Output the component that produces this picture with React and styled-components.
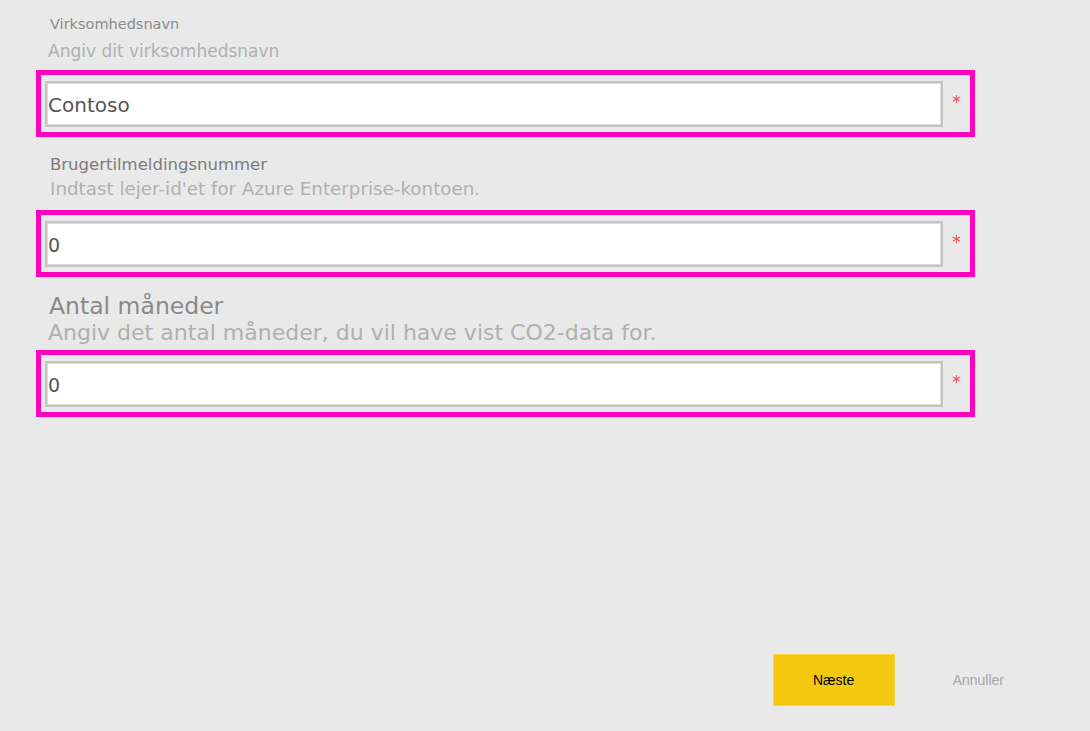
import React from 'react'
import styled, { createGlobalStyle } from 'styled-components';

const GlobalStyle = createGlobalStyle`
    html, body {
        margin: 0;
        padding: 0;
        background-color: #e9e9e9;
    }
    * {
        box-sizing: border-box;
    }
`;

const Page = styled.div`
    width: 1090px;
    height: 731px;
    display: flex;
    flex-direction: column;
    background-color: #e9e9e9;
    font-family: "DejaVu Sans", "Liberation Sans", sans-serif;
    overflow: hidden;
`;

const Form = styled.div`
    display: flex;
    flex-direction: column;
    padding: 15px 0 0 36px;
    width: 975px;
`;

const Field = styled.div`
    display: flex;
    flex-direction: column;
    margin-top: ${({ top }) => top}px;
`;

const Title = styled.div`
    font-size: ${({ size }) => size}px;
    line-height: ${({ lh }) => lh}px;
    color: ${({ color }) => color};
    padding-left: ${({ indent }) => indent}px;
    white-space: nowrap;
`;

const Hint = styled.div`
    font-size: ${({ size }) => size}px;
    line-height: ${({ lh }) => lh}px;
    color: #b0b0b0;
    padding-left: ${({ indent }) => indent}px;
    margin-top: ${({ gap }) => gap}px;
    margin-bottom: ${({ below }) => below}px;
    white-space: nowrap;
`;

const Highlight = styled.div`
    display: flex;
    align-items: center;
    border: 5px solid #ff00bf;
    padding: 5px 0 5px 4px;
    height: 67px;
`;

const Input = styled.input`
    flex: 1;
    height: 46px;
    margin: 0;
    padding: 2px 0 0 1px;
    border: 2px solid #c4c4c4;
    box-shadow: inset 0 0 0 1px #dcdcdc;
    background-color: #ffffff;
    font-family: "DejaVu Sans", "Liberation Sans", sans-serif;
    font-size: ${({ size }) => size}px;
    color: #555555;
    outline: none;
`;

const Required = styled.span`
    width: 27px;
    text-align: center;
    font-size: 17px;
    line-height: 17px;
    color: #f04848;
    margin-top: -3px;
    font-family: "DejaVu Sans", sans-serif;
`;

const Footer = styled.div`
    margin-top: auto;
    display: flex;
    align-items: center;
    justify-content: flex-end;
    gap: 58px;
    padding: 0 86px 25px 0;
`;

const PrimaryButton = styled.button`
    width: 122px;
    height: 52px;
    background-color: #f2c811;
    border: 1px solid #f4d43e;
    font-family: "Liberation Sans", Arial, sans-serif;
    font-size: 14px;
    color: #000000;
    cursor: pointer;
`;

const TextButton = styled.button`
    background: none;
    border: none;
    padding: 0;
    font-family: "Liberation Sans", Arial, sans-serif;
    font-size: 14px;
    color: #a6a6a6;
    cursor: pointer;
`;

const fields = [
    {
        top: 0,
        title: 'Virksomhedsnavn', titleSize: 14.5, titleLh: 18, titleColor: '#8c8c8c', titleIndent: 14,
        hint: 'Angiv dit virksomhedsnavn', hintSize: 17, hintLh: 20, hintIndent: 12, gap: 8, below: 9,
        value: 'Contoso', valueSize: 20,
    },
    {
        top: 18,
        title: 'Brugertilmeldingsnummer', titleSize: 16.5, titleLh: 20, titleColor: '#7c7c7c', titleIndent: 14,
        hint: "Indtast lejer-id'et for Azure Enterprise-kontoen.", hintSize: 18.3, hintLh: 22, hintIndent: 14, gap: 3, below: 10,
        value: '0', valueSize: 19,
    },
    {
        top: 18,
        title: 'Antal måneder', titleSize: 23.5, titleLh: 22, titleColor: '#8a8a8a', titleIndent: 13,
        hint: 'Angiv det antal måneder, du vil have vist CO2-data for.', hintSize: 22, hintLh: 22, hintIndent: 12, gap: 5, below: 6,
        value: '0', valueSize: 19,
    },
];

const App = () => {
    return (
        <Page>
            <GlobalStyle />
            <Form>
                {fields.map((f) => (
                    <Field key={f.title} top={f.top}>
                        <Title size={f.titleSize} lh={f.titleLh} color={f.titleColor} indent={f.titleIndent}>
                            {f.title}
                        </Title>
                        <Hint size={f.hintSize} lh={f.hintLh} indent={f.hintIndent} gap={f.gap} below={f.below}>
                            {f.hint}
                        </Hint>
                        <Highlight>
                            <Input size={f.valueSize} defaultValue={f.value} readOnly />
                            <Required>*</Required>
                        </Highlight>
                    </Field>
                ))}
            </Form>
            <Footer>
                <PrimaryButton>Næste</PrimaryButton>
                <TextButton>Annuller</TextButton>
            </Footer>
        </Page>
    )
}

export default App;
